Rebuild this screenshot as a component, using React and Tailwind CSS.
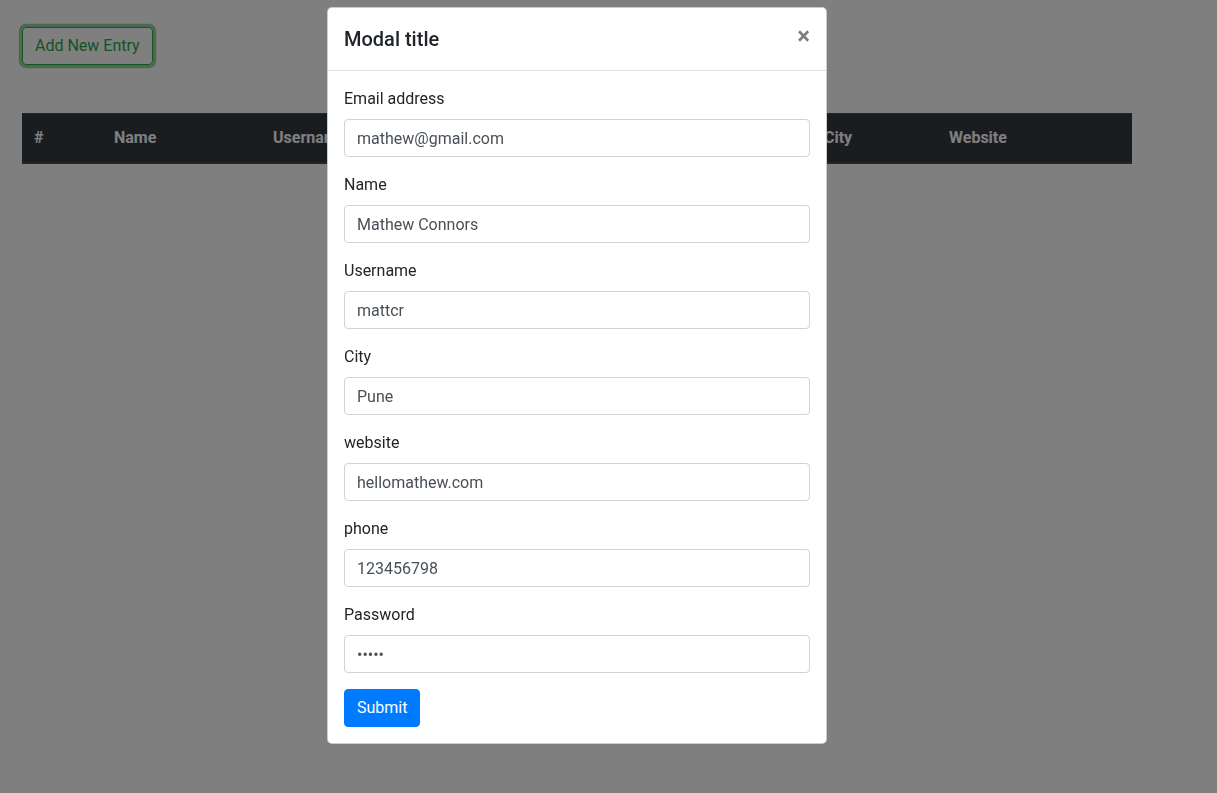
import React from 'react';

const columns = [
  { label: '#', w: 'w-[80px]' },
  { label: 'Name', w: 'w-[159px]' },
  { label: 'Username', w: 'w-[140px]' },
  { label: 'Email', w: 'w-[250px]' },
  { label: 'Phone', w: 'w-[161px]' },
  { label: 'City', w: 'w-[125px]' },
  { label: 'Website', w: 'w-[195px]' },
];

const fields = [
  { label: 'Email address', value: 'mathew@gmail.com', type: 'email' },
  { label: 'Name', value: 'Mathew Connors', type: 'text' },
  { label: 'Username', value: 'mattcr', type: 'text' },
  { label: 'City', value: 'Pune', type: 'text' },
  { label: 'website', value: 'hellomathew.com', type: 'text' },
  { label: 'phone', value: '123456798', type: 'text' },
  { label: 'Password', value: '12345', type: 'password' },
];

export default function App() {
  return (
    <div className="relative min-h-screen bg-white font-[Roboto,sans-serif] text-[16px] leading-[1.5] text-[#212529]">
      <div className="pl-[22px] pt-[27px]">
        <button className="rounded-[4px] border border-[#28a745] px-[12px] py-[6px] text-[16px] leading-[1.5] text-[#28a745] shadow-[0_0_0_3.2px_rgba(40,167,69,0.5)]">
          Add New Entry
        </button>

        <div className="mt-[48px] flex w-[1110px] border-t border-b-2 border-[#454d55] bg-[#343a40] text-white">
          {columns.map((c) => (
            <div key={c.label} className={`${c.w} p-[12px] font-bold`}>
              {c.label}
            </div>
          ))}
        </div>
      </div>

      {/* backdrop + modal */}
      <div className="fixed inset-0 bg-black/50">
        <div className="absolute left-[327px] top-[7px] w-[500px] rounded-[5px] border border-black/20 bg-white">
          <div className="flex items-start justify-between border-b border-[#dee2e6] p-[16px]">
            <h5 className="text-[20px] font-medium leading-[1.5]">Modal title</h5>
            <button className="-mt-[3px] h-[30px] text-[24px] font-bold leading-[30px] text-black/50">×</button>
          </div>
          <div className="p-[16px]">
            {fields.map((f) => (
              <div key={f.label} className="mb-[16px]">
                <label className="mb-[8px] block">{f.label}</label>
                <input
                  type={f.type}
                  defaultValue={f.value}
                  className="block h-[38px] w-full rounded-[4px] border border-[#ced4da] px-[12px] py-[6px] text-[16px] text-[#495057] outline-none"
                />
              </div>
            ))}
            <button className="rounded-[4px] border border-[#007bff] bg-[#007bff] px-[12px] py-[6px] leading-[1.5] text-white">
              Submit
            </button>
          </div>
        </div>
      </div>
    </div>
  );
}
